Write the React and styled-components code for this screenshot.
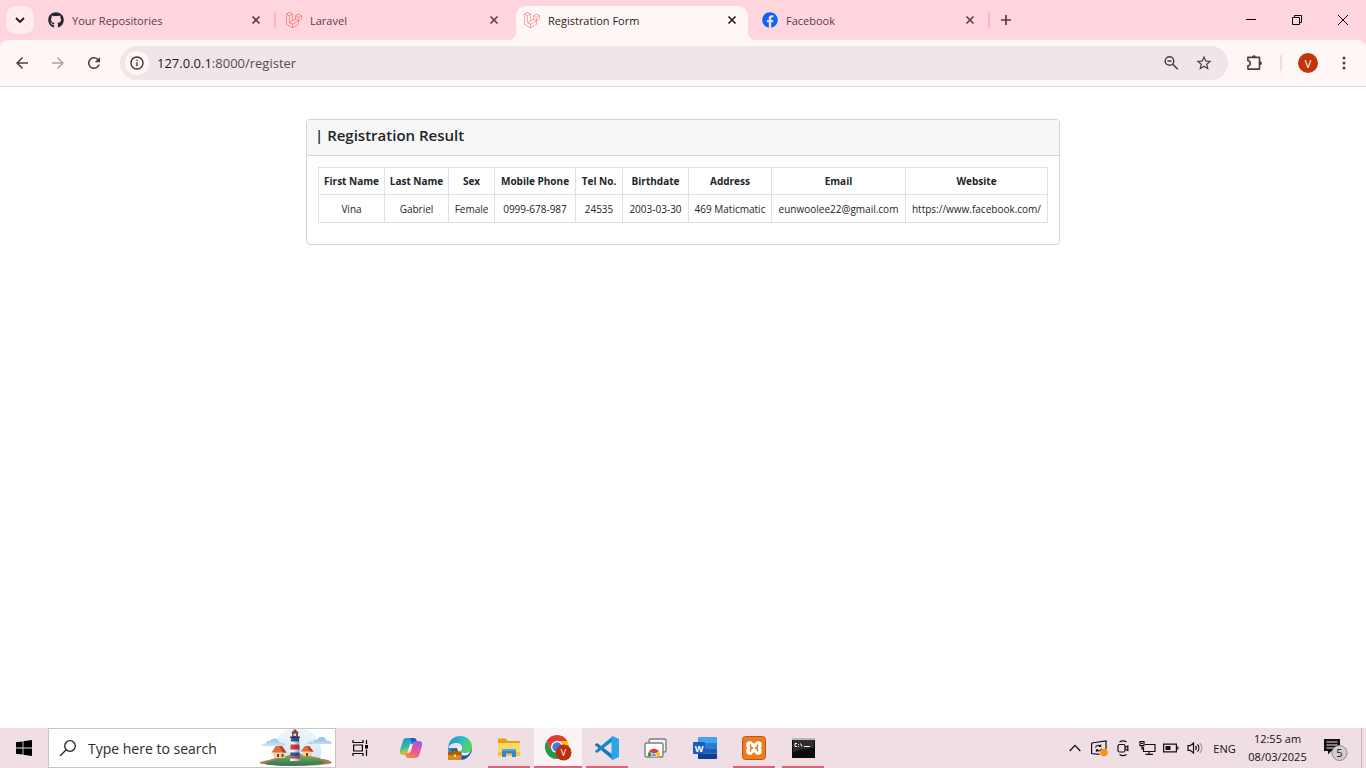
import React from "react";
import styled, { createGlobalStyle, css } from "styled-components";
import { FaGithub, FaLaravel, FaFacebook } from "react-icons/fa";
import { MdArrowBack, MdArrowForward, MdRefresh, MdStarBorder, MdInfoOutline } from "react-icons/md";

const GlobalStyle = createGlobalStyle`
  * { box-sizing: border-box; }
  body {
    margin: 0;
    background: #fff;
    font-family: "Segoe UI", "Open Sans", "Noto Sans", sans-serif;
    color: #212529;
  }
  button, input { font: inherit; color: inherit; }
  button { border: 0; padding: 0; background: none; cursor: pointer; }
`;

const Screen = styled.div`
  min-height: 100vh;
  display: flex;
  flex-direction: column;
`;

/* ---------- Tab strip ---------- */

const TabStrip = styled.header`
  display: flex;
  align-items: stretch;
  height: 40px;
  background: #ffd6de;
  color: #5c3a44;
`;

const TabSearch = styled.button`
  display: flex;
  align-items: center;
  justify-content: center;
  width: 28px;
  height: 28px;
  margin: 6px;
  border-radius: 10px;
  background: #ffecef;
  color: #1f1417;
`;

const Tabs = styled.nav`
  display: flex;
  align-items: flex-end;
`;

const Tab = styled.div`
  position: relative;
  display: flex;
  align-items: center;
  gap: 8px;
  width: 232px;
  height: 34px;
  padding: 0 8px 6px;
  font-size: 11px;

  ${(p) =>
    p.$active &&
    css`
      background: #fff7f6;
      color: #1f1a1b;
      border-radius: 10px 10px 0 0;

      &::before,
      &::after {
        content: "";
        position: absolute;
        bottom: 0;
        width: 8px;
        height: 8px;
      }
      &::before {
        right: 100%;
        background: radial-gradient(circle at 0 0, #ffd6de 8px, #fff7f6 8px);
      }
      &::after {
        left: 100%;
        background: radial-gradient(circle at 100% 0, #ffd6de 8px, #fff7f6 8px);
      }
    `}
`;

const Favicon = styled.span`
  display: flex;
  width: 16px;
  height: 16px;
  color: ${(p) => p.$color};
`;

const TabTitle = styled.span`
  flex: 1;
  white-space: nowrap;
`;

const TabClose = styled.button`
  display: flex;
  align-items: center;
  justify-content: center;
  width: 16px;
  height: 16px;
`;

const TabDivider = styled.span`
  align-self: center;
  width: 2px;
  height: 16px;
  margin: 0 2px;
  background: ${(p) => (p.$hidden ? "transparent" : "#ffb3c3")};
`;

const NewTab = styled.button`
  display: flex;
  align-items: center;
  justify-content: center;
  width: 28px;
`;

const WindowControls = styled.div`
  display: flex;
  margin-left: auto;
  color: #000;
`;

const WindowButton = styled.button`
  display: flex;
  align-items: center;
  justify-content: center;
  width: 46px;
`;

/* ---------- Toolbar ---------- */

const ToolbarBack = styled.div`
  background: #ffd6de;
`;

const Toolbar = styled.div`
  display: flex;
  align-items: center;
  gap: 8px;
  height: 47px;
  padding: 0 8px;
  background: #fff7f6;
  border-bottom: 1px solid #e6dfe1;
  border-radius: 8px 8px 0 0;
  color: #4f3f43;
`;

const ToolButton = styled.button`
  display: flex;
  align-items: center;
  justify-content: center;
  width: 28px;
  height: 28px;
  opacity: ${(p) => (p.$dim ? 0.45 : 1)};
`;

const AddressBar = styled.div`
  display: flex;
  align-items: center;
  flex: 1;
  height: 34px;
  margin: 0 4px;
  padding: 0 10px 0 5px;
  border-radius: 17px;
  background: #f0e5e9;
`;

const SiteInfo = styled.button`
  display: flex;
  align-items: center;
  justify-content: center;
  width: 24px;
  height: 24px;
  border-radius: 12px;
  background: #fff7f6;
  color: #3a2d30;
`;

const Address = styled.a`
  flex: 1;
  padding-left: 8px;
  font-size: 13px;
  color: #5b4b50;
  text-decoration: none;

  strong {
    font-weight: 400;
    color: #1f1a1b;
  }
`;

const AddressAction = styled.button`
  display: flex;
  align-items: center;
  justify-content: center;
  width: 28px;
  height: 28px;
  margin-left: 5px;
`;

const ToolDivider = styled.span`
  width: 2px;
  height: 16px;
  margin: 0 4px;
  background: #ffd6de;
`;

const Avatar = styled.span`
  display: flex;
  align-items: center;
  justify-content: center;
  width: 20px;
  height: 20px;
  border-radius: 10px;
  background: #bf360c;
  color: #fff;
  font-size: 11px;
`;

/* ---------- Page ---------- */

const Page = styled.main`
  flex: 1;
  padding: 32px 16px;
`;

const Card = styled.section`
  max-width: 754px;
  margin: 0 auto;
  border: 1px solid #d3d3d4;
  border-radius: 4px;
`;

const CardHeader = styled.div`
  padding: 4px 8px 9px;
  background: #f7f7f7;
  border-bottom: 1px solid #d3d3d4;
`;

const CardTitle = styled.h1`
  margin: 0;
  font-size: 15px;
  line-height: 22px;
  font-weight: 600;
`;

const CardBody = styled.div`
  padding: 11px 11px 21px;
  overflow-x: auto;
`;

const ResultTable = styled.table`
  width: 100%;
  table-layout: fixed;
  border-collapse: collapse;
  text-align: center;
  white-space: nowrap;
`;

const Column = styled.col`
  width: ${(p) => p.$width}px;
`;

const Cell = styled.td`
  height: 28px;
  padding: 0;
  border: 1px solid #dee2e6;
  font-size: 10px;
  line-height: 16px;
`;

const HeadCell = styled(Cell)`
  height: 27px;
  font-weight: 700;
`;

/* ---------- Taskbar ---------- */

const Taskbar = styled.footer`
  display: flex;
  height: 40px;
  background: #efdee4;
  color: #111;
`;

const StartButton = styled.button`
  display: flex;
  align-items: center;
  justify-content: center;
  width: 48px;
`;

const SearchBox = styled.label`
  display: flex;
  align-items: center;
  width: 288px;
  padding: 0 2px 0 10px;
  background: #fff;
  border: 1px solid #c9c4c6;
`;

const SearchInput = styled.input`
  flex: 1;
  min-width: 0;
  padding: 0 0 0 11px;
  border: 0;
  outline: 0;
  background: none;
  font-size: 14px;

  &::placeholder {
    color: #2b2b2b;
    opacity: 1;
  }
`;

const TaskList = styled.nav`
  display: flex;
  gap: 1px;
  margin-left: 3px;
`;

const TaskButton = styled.button`
  display: flex;
  align-items: center;
  justify-content: center;
  width: 48px;
  padding-top: 2px;
  background: ${(p) => (p.$active ? "#faf3f5" : "transparent")};
  border-bottom: 2px solid transparent;
  border-image: ${(p) =>
    p.$active
      ? "linear-gradient(#d9657b, #d9657b) 1"
      : p.$open
      ? "linear-gradient(90deg, transparent 4px, #d9657b 4px, #d9657b 44px, transparent 44px) 1"
      : "none"};
`;

const Tray = styled.div`
  display: flex;
  align-items: center;
  margin-left: auto;
`;

const TrayButton = styled.button`
  display: flex;
  align-items: center;
  justify-content: center;
  width: 24px;
  height: 40px;
`;

const Language = styled.button`
  width: 35px;
  font-size: 11px;
  text-align: center;
`;

const Clock = styled.time`
  width: 71px;
  font-size: 11px;
  line-height: 18px;
  text-align: center;
`;

const Notifications = styled.button`
  display: flex;
  align-items: center;
  justify-content: center;
  width: 48px;
  height: 40px;
  padding-right: 4px;
`;

const ShowDesktop = styled.button`
  width: 5px;
  height: 40px;
  border-left: 1px solid #c4b4b9;
`;

/* ---------- Drawings ---------- */

const CrossIcon = () => (
  <svg width="10" height="10" viewBox="0 0 10 10" stroke="currentColor" strokeWidth="1.6">
    <path d="M1.500 1.500l7 7M8.500 1.500l-7 7" />
  </svg>
);

const ZoomOutIcon = () => (
  <svg width="16" height="16" viewBox="0 0 16 16" fill="none" stroke="currentColor" strokeWidth="1.5">
    <circle cx="6.500" cy="6" r="4.300" />
    <path d="M9.600 9.100L14.800 14.300M4.500 6h4" />
  </svg>
);

const PuzzleIcon = () => (
  <svg width="18" height="18" viewBox="0 0 18 18" fill="none">
    <path d="M2.900 3.400h11.600v11.700H2.900v-3.400c3.200-.4 3.200-4.500 0-4.900z" stroke="currentColor" strokeWidth="1.600" strokeLinejoin="round" />
    <path d="M7 3.100a1.900 1.900 0 013.800 0zM15 7.300a1.900 1.900 0 010 3.800z" fill="currentColor" />
  </svg>
);

const LighthouseArt = () => (
  <svg width="74" height="38" viewBox="0 0 74 38">
    <defs>
      <linearGradient id="hill" x1="0" y1="0" x2="0" y2="1">
        <stop offset="0" stopColor="#8fb34c" />
        <stop offset=".5" stopColor="#4d9552" />
        <stop offset="1" stopColor="#2a7558" />
      </linearGradient>
      <linearGradient id="sky" x1="0" y1="0" x2="0" y2="1">
        <stop offset="0" stopColor="#eef8fd" />
        <stop offset="1" stopColor="#cfe8f6" />
      </linearGradient>
      <linearGradient id="cloud" x1="0" y1="0" x2="0" y2="1">
        <stop offset="0" stopColor="#8dbbe6" />
        <stop offset="1" stopColor="#cfe3f4" />
      </linearGradient>
      <linearGradient id="shade" x1="0" y1="0" x2="1" y2="0">
        <stop offset=".3" stopColor="#2a2f55" stopOpacity="0" />
        <stop offset="1" stopColor="#2a2f55" stopOpacity=".5" />
      </linearGradient>
    </defs>
    <path d="M16 32a24 24 0 1145-2z" fill="url(#sky)" />
    <path d="M2 17h25c-1-4-4-4-6-3-1-5-8-6-10-2-3-1-4 1-4 3-2-1-4 0-5 2zM48 15h25c-1-3-3-4-5-3-2-5-8-5-10-1-3-1-4 1-4 2-3-1-5 0-6 2z" fill="url(#cloud)" />
    <path d="M0 34c4-3 9-2 13-4 5-2 11-1 17-4 6-2 16-1 20 1 4 1 9 1 13 3 4 0 8 1 10 4-12 4-60 4-73 0z" fill="#b07a58" />
    <path d="M6 35c3-4 11-3 15-6 6-3 12-3 18-3 9 0 14 4 20 4 4 1 6 2 7 4-12 3-48 4-60 1z" fill="url(#hill)" />
    <path d="M15 22h11v7H15zM44 21h9v6h-9z" fill="#f7d0a0" />
    <path d="M12.500 23.500L17 17h6l4.500 6.500zM41.500 22.500L46 17h4l4.500 5.500z" fill="#e26a34" />
    <path d="M23 17l4.500 6.500H24L20 17zM50 17l4.500 5.500H51L48 17z" fill="#b9441f" />
    <path d="M18 25h2v3h-2zM22.500 25h2v3h-2zM47 24h2v3h-2z" fill="#7b3c22" />
    <path d="M32 8h8l1 24H31z" fill="#f6f2f0" />
    <path d="M32 8h8l.2 4.500h-8.400zM31.400 23.500h9.200l.2 4h-9.600z" fill="#2f5a96" />
    <path d="M31.600 15.500h8.800l.2 5h-9.200z" fill="#d63a3c" />
    <path d="M31.200 27.500h9.600l.1 2h-9.800z" fill="#d63a3c" />
    <path d="M33 3.500h6V8h-6z" fill="#3c5a85" />
    <path d="M32 4l4-4 4 4z" fill="#a83540" />
    <path d="M34.500 4.500h2.500V7h-2.500z" fill="#ffd66e" />
    <path d="M31 7.500h10V9H31z" fill="#2c3a67" />
    <path d="M32 8h8l1 24H31z" fill="url(#shade)" />
  </svg>
);

const TaskViewIcon = () => (
  <svg width="17" height="16" viewBox="0 0 17 16" fill="none" stroke="#000" strokeWidth="1.2">
    <path d="M1 0v2.500h10V0M1 16v-2.500h10V16M1.600 5h8.800v6H1.600zM14.500 0v4M14.500 9.500V16" />
    <path d="M13 5h3v3.500h-3z" fill="#000" stroke="none" />
  </svg>
);

const CopilotIcon = () => (
  <svg width="24" height="24" viewBox="0 0 24 24">
    <defs>
      <linearGradient id="cpA" x1="0" y1="0" x2=".3" y2="1">
        <stop offset="0" stopColor="#1b8fe0" />
        <stop offset=".55" stopColor="#36b6a6" />
        <stop offset="1" stopColor="#f2c522" />
      </linearGradient>
      <linearGradient id="cpB" x1=".6" y1="0" x2=".2" y2="1">
        <stop offset="0" stopColor="#a35ae0" />
        <stop offset=".5" stopColor="#e8588f" />
        <stop offset="1" stopColor="#f98a4c" />
      </linearGradient>
    </defs>
    <path d="M7.500 2h7c2 0 2.600 1.200 3.200 3l.5 1.600h-3c-1.600 0-2.300.8-2.800 2.400l-2 6.500C9.700 17.800 8.800 19 6.500 19H4c-3 0-3.600-2.500-2.800-5.200L3.800 5C4.500 3 5.500 2 7.500 2z" fill="url(#cpA)" />
    <path d="M16.500 22h-7c-2 0-2.600-1.200-3.200-3l-.5-1.600h3c1.600 0 2.300-.8 2.800-2.400l2-6.500C14.300 6.200 15.200 5 17.500 5H20c3 0 3.600 2.500 2.800 5.200L20.200 19c-.7 2-1.700 3-3.700 3z" fill="url(#cpB)" />
    <path d="M11.300 2h3.200c2 0 2.600 1.200 3.200 3-3 .2-3.700 1.600-4.300 3.500z" fill="#2457c5" />
    <path d="M10.800 8.200h3l-2 6.500c-.3 1-.8 1.700-1.600 1.700H8.500z" fill="#f4e7ef" />
  </svg>
);

const EdgeIcon = () => (
  <svg width="26" height="26" viewBox="0 0 26 26">
    <defs>
      <linearGradient id="edA" x1="0" y1=".2" x2="1" y2=".5">
        <stop offset="0" stopColor="#1c93dc" />
        <stop offset=".55" stopColor="#2dbfc4" />
        <stop offset="1" stopColor="#5fd552" />
      </linearGradient>
      <linearGradient id="edB" x1="0" y1="0" x2=".8" y2="1">
        <stop offset="0" stopColor="#1a8fe0" />
        <stop offset="1" stopColor="#0c4da3" />
      </linearGradient>
    </defs>
    <path d="M1 13a12 12 0 0024 0z" fill="url(#edB)" />
    <path d="M1 14A12 12 0 0113 1c7 0 12 5 12 10.500 0 4-3 6.500-6.500 6.500-3 0-4.500-1.200-4.500-2s1.200-1.300 1.200-3.300C15.200 10 12.500 8 9.300 8 5 8 1.500 10.500 1 14z" fill="url(#edA)" />
    <path d="M11 10.500c3 0 4.400 1.400 4.200 3-.1 1.500-1.200 1.800-1.200 2.500 0 .8 1.500 2 4.500 2 2 0 3.800-.8 5-2.200C22.500 20 19 21 16.500 20.500c-5-.8-8-6-5.500-10z" fill="#eef3f7" />
    <path d="M1 16.500h13.500V25H1z" rx="1" fill="#d98a1d" />
    <path d="M1 16.500h13.500v3.700H1z" fill="#a2600f" />
    <path d="M5.500 16.500V15h4.500v1.500" fill="none" stroke="#6d3b09" strokeWidth="1.200" />
    <path d="M7 19.500h2V22H7z" fill="#ffe08a" />
  </svg>
);

const ExplorerIcon = () => (
  <svg width="22" height="20" viewBox="0 0 22 20">
    <path d="M0 2c0-.8.6-1.500 1.500-1.500h6L10 3h10.500c.8 0 1.500.6 1.500 1.500V17H0z" fill="#dfa21b" />
    <path d="M0 5h22v13H0z" fill="#ffd767" />
    <path d="M0 14h22v4H0z" fill="#f6c344" />
    <path d="M4 19v-6.500c0-.8.700-1.500 1.500-1.500h11c.8 0 1.500.700 1.500 1.500V19h-4v-3.500H8V19z" fill="#2f87cf" />
    <path d="M5.500 11h11c.8 0 1.500.700 1.500 1.500V13H4v-.5c0-.8.700-1.500 1.500-1.500z" fill="#4fa7e5" />
  </svg>
);

const ChromeIcon = () => (
  <svg width="28" height="28" viewBox="0 0 28 28">
    <path d="M13 13V7h10.400A12 12 0 0113 25z" fill="#fbc116" />
    <path d="M2.600 7A12 12 0 0013 25l5.200-9L13 13 7.800 16z" fill="#279847" />
    <path d="M2.600 7A12 12 0 0123.400 7H13L7.800 16z" fill="#e33b2e" />
    <circle cx="13" cy="13" r="6" fill="#fff" />
    <circle cx="13" cy="13" r="4.700" fill="#3b7de9" />
    <circle cx="19.500" cy="18.500" r="8" fill="#b9300f" />
    <text x="19.500" y="22" textAnchor="middle" fontSize="9" fill="#fff">V</text>
  </svg>
);

const CodeIcon = () => (
  <svg width="24" height="24" viewBox="0 0 24 24">
    <path d="M0 8.500L2 7l16 12v5L.3 9.300z" fill="#1177b8" />
    <path d="M0 15.500L2 17 18 5V0L.3 14.700z" fill="#1788cc" />
    <path d="M17.500 0L24 3v18l-6.500 3c-.6-.3-1-1-1-1.500V1.500c0-.5.400-1.200 1-1.500z" fill="#2ba5ea" />
  </svg>
);

const RemoteIcon = () => (
  <svg width="24" height="20" viewBox="0 0 24 20">
    <rect x="5" y="1" width="17" height="13" rx="1.500" fill="#f2f4f5" stroke="#7b7f83" strokeWidth="1.400" />
    <rect x="1" y="5" width="18" height="14" rx="1.500" fill="#fff" stroke="#7b7f83" strokeWidth="1.400" />
    <path d="M4 18.300a6 6 0 011.200-5L8 16.500v1.800z" fill="#2a9d4a" />
    <path d="M5 13.500a6 6 0 0110 0L10 16z" fill="#e33b2e" />
    <path d="M14.800 13.300a6 6 0 011.200 5h-4v-3z" fill="#fbc116" />
    <path d="M7.300 18.300a2.700 2.700 0 015.400 0z" fill="#3b7de9" stroke="#fff" strokeWidth=".7" />
  </svg>
);

const WordIcon = () => (
  <svg width="24" height="22" viewBox="0 0 24 22">
    <path d="M6 0h17c.6 0 1 .4 1 1v5H5V1c0-.6.400-1 1-1z" fill="#41a5ee" />
    <path d="M5 6h19v5.300H5z" fill="#2b7cd3" />
    <path d="M5 11.300h19v5.200H5z" fill="#185abd" />
    <path d="M5 16.500h19V21c0 .6-.4 1-1 1H6c-.6 0-1-.4-1-1z" fill="#103f91" />
    <rect y="5" width="12" height="12" rx="1" fill="#1b5cbe" />
    <text x="6" y="14.500" textAnchor="middle" fontSize="9" fontWeight="700" fill="#fff">W</text>
  </svg>
);

const XamppIcon = () => (
  <svg width="24" height="24" viewBox="0 0 24 24">
    <rect x=".5" y=".5" width="23" height="23" rx="3" fill="#f07b1d" stroke="#b8560c" />
    <path
      d="M8.700 6.500H7.500a2 2 0 00-2 2v1.700l1.300 1.800-1.300 1.800v1.700a2 2 0 002 2h1.200l3.300-3 3.300 3h1.200a2 2 0 002-2v-1.700L17.200 12l1.300-1.800V8.500a2 2 0 00-2-2h-1.200l-3.300 3z"
      fill="#fff"
      stroke="#fff"
      strokeWidth="2.400"
      strokeLinejoin="round"
    />
    <path d="M8.500 9v2l2 1-2 1v2M15.500 9v2l-2 1 2 1v2" fill="none" stroke="#ee7a1e" strokeWidth="1.500" strokeLinejoin="round" strokeLinecap="round" />
  </svg>
);

const TerminalIcon = () => (
  <svg width="23" height="20" viewBox="0 0 23 20">
    <path d="M0 0h23v20H0z" fill="#0b0b0b" />
    <path d="M0 0h23v2H0z" fill="#b9b9b9" />
    <path d="M1 2h21v8c-7 0-14 1-21 4z" fill="#2e2e2e" />
    <path d="M5 5.500H3v3h2M6.500 6v.8M6.500 8v.8M8.500 5.500l1.500 3M12 8.500h6" fill="none" stroke="#fff" strokeWidth="1" />
  </svg>
);

const ChevronIcon = () => (
  <svg width="12" height="8" viewBox="0 0 12 8" fill="none" stroke="#111" strokeWidth="1.300">
    <path d="M.7 7L6 1.400 11.300 7" />
  </svg>
);

const SyncIcon = () => (
  <svg width="18" height="18" viewBox="0 0 18 18" fill="none" stroke="#111" strokeWidth="1.200">
    <path d="M1.600 4L16 2v8M1.600 4v10.500l8 .8" />
    <path d="M5.500 8.500a3 3 0 015-1.300M10.700 5.500v2H8.600M11.500 9.500a3 3 0 01-5 1.500M6.400 12.700v-2h2" strokeWidth="1.100" />
    <circle cx="14" cy="13.500" r="3.800" fill="#f7960a" stroke="none" />
  </svg>
);

const MeetIcon = () => (
  <svg width="12" height="18" viewBox="0 0 12 18" fill="none" stroke="#111" strokeWidth="1.200">
    <rect x="1" y="5.500" width="7" height="7.500" rx="1.500" />
    <path d="M8 8.500l2.800-1.500v4.500L8 10M2.500 3c2-1.400 5-1.400 7 0M2.500 15.500c2 1.400 5 1.400 7 0" />
  </svg>
);

const NetworkIcon = () => (
  <svg width="17" height="16" viewBox="0 0 17 16" fill="none" stroke="#111" strokeWidth="1.200">
    <path d="M6 4.500h10v7H4.500V7M10 11.500v2.500M6.500 14.400h7.500M1 1.600h4v4H1zM3 5.600V9h1.500M2 3.500h2" />
  </svg>
);

const BatteryIcon = () => (
  <svg width="16" height="10" viewBox="0 0 16 10">
    <path d="M.6 1.100h12.800v7.800H.6zM14.800 3.500v3" fill="none" stroke="#111" strokeWidth="1.200" />
    <path d="M2.500 3h5v4h-5z" fill="#111" />
  </svg>
);

const SpeakerIcon = () => (
  <svg width="17" height="14" viewBox="0 0 17 14" fill="none" stroke="#111" strokeWidth="1.200">
    <path d="M1 4.700h2.200L6.500 2v10L3.200 9.300H1zM8.500 5c1 1.200 1 2.800 0 4" />
    <path d="M10.500 3.500c1.800 2 1.800 5 0 7" />
    <path d="M12.800 2c2.600 3 2.600 7 0 10" stroke="#a79aa0" />
  </svg>
);

const NotificationIcon = () => (
  <svg width="26" height="26" viewBox="0 0 26 26">
    <path d="M2 4h16v12H9.500L6 19.500V16H2z" fill="#111" />
    <path d="M4.500 7h11M4.500 10h11M4.500 13h11" stroke="#efdee4" strokeWidth="1.100" />
    <circle cx="17.500" cy="18" r="7.500" fill="#d3cdd0" stroke="#8f898c" />
    <text x="17.500" y="22" textAnchor="middle" fontSize="11" fill="#111">5</text>
  </svg>
);

/* ---------- Data ---------- */

const TABS = [
  { title: "Your Repositories", icon: FaGithub, color: "#24292f" },
  { title: "Laravel", icon: FaLaravel, color: "#ff4f42", last: true },
  { title: "Registration Form", icon: FaLaravel, color: "#ff5f52", active: true },
  { title: "Facebook", icon: FaFacebook, color: "#0866ff" },
];

const COLUMNS = [
  { label: "First Name", value: "Vina", width: 66 },
  { label: "Last Name", value: "Gabriel", width: 64 },
  { label: "Sex", value: "Female", width: 46 },
  { label: "Mobile Phone", value: "0999-678-987", width: 81 },
  { label: "Tel No.", value: "24535", width: 47 },
  { label: "Birthdate", value: "2003-03-30", width: 66 },
  { label: "Address", value: "469 Maticmatic", width: 83 },
  { label: "Email", value: "eunwoolee22@gmail.com", width: 134 },
  { label: "Website", value: "https://www.facebook.com/", width: 142 },
];

const TASKS = [
  { name: "Copilot", icon: <CopilotIcon /> },
  { name: "Microsoft Edge", icon: <EdgeIcon /> },
  { name: "File Explorer", icon: <ExplorerIcon />, open: true },
  { name: "Google Chrome", icon: <ChromeIcon />, active: true },
  { name: "Visual Studio Code", icon: <CodeIcon />, open: true },
  { name: "Remote Desktop", icon: <RemoteIcon /> },
  { name: "Word", icon: <WordIcon /> },
  { name: "XAMPP", icon: <XamppIcon />, open: true },
  { name: "Command Prompt", icon: <TerminalIcon />, open: true },
];

const TRAY = [
  { name: "Show hidden icons", icon: <ChevronIcon /> },
  { name: "Updates", icon: <SyncIcon /> },
  { name: "Meet Now", icon: <MeetIcon /> },
  { name: "Network", icon: <NetworkIcon /> },
  { name: "Battery", icon: <BatteryIcon /> },
  { name: "Volume", icon: <SpeakerIcon /> },
];

export default function App() {
  return (
    <Screen>
      <GlobalStyle />
      <TabStrip>
        <TabSearch aria-label="Search tabs">
          <svg width="10" height="6" viewBox="0 0 10 6" fill="none" stroke="currentColor" strokeWidth="1.800">
            <path d="M1 1l4 4 4-4" />
          </svg>
        </TabSearch>
        <Tabs>
          {TABS.map(({ title, icon: Icon, color, active, last }) => (
            <React.Fragment key={title}>
              <Tab $active={active}>
                <Favicon $color={color}><Icon size={16} /></Favicon>
                <TabTitle>{title}</TabTitle>
                <TabClose aria-label={`Close ${title}`}><CrossIcon /></TabClose>
              </Tab>
              <TabDivider $hidden={active || last} />
            </React.Fragment>
          ))}
        </Tabs>
        <NewTab aria-label="New tab">
          <svg width="12" height="12" viewBox="0 0 12 12" stroke="currentColor" strokeWidth="1.700">
            <path d="M6 1v10M1 6h10" />
          </svg>
        </NewTab>
        <WindowControls>
          <WindowButton aria-label="Minimize">
            <svg width="10" height="10" viewBox="0 0 10 10" stroke="currentColor"><path d="M0 4.500h10" /></svg>
          </WindowButton>
          <WindowButton aria-label="Restore">
            <svg width="10" height="10" viewBox="0 0 10 10" fill="none" stroke="currentColor">
              <path d="M.5 2.500h7v7h-7zM2.500 2.500v-2h7v7h-2" />
            </svg>
          </WindowButton>
          <WindowButton aria-label="Close">
            <svg width="10" height="10" viewBox="0 0 10 10" stroke="currentColor"><path d="M0 0l10 10M10 0L0 10" /></svg>
          </WindowButton>
        </WindowControls>
      </TabStrip>

      <ToolbarBack>
        <Toolbar>
          <ToolButton aria-label="Back"><MdArrowBack size={18} /></ToolButton>
          <ToolButton aria-label="Forward" $dim><MdArrowForward size={18} /></ToolButton>
          <ToolButton aria-label="Reload"><MdRefresh size={18} /></ToolButton>
          <AddressBar>
            <SiteInfo aria-label="Site information"><MdInfoOutline size={16} /></SiteInfo>
            <Address href="#register"><strong>127.0.0.1</strong>:8000/register</Address>
            <AddressAction aria-label="Zoom"><ZoomOutIcon /></AddressAction>
            <AddressAction aria-label="Bookmark"><MdStarBorder size={18} /></AddressAction>
          </AddressBar>
          <ToolButton aria-label="Extensions"><PuzzleIcon /></ToolButton>
          <ToolDivider />
          <ToolButton aria-label="Profile"><Avatar>V</Avatar></ToolButton>
          <ToolButton aria-label="Menu">
            <svg width="4" height="14" viewBox="0 0 4 14" fill="currentColor">
              <circle cx="2" cy="2" r="1.500" /><circle cx="2" cy="7" r="1.500" /><circle cx="2" cy="12" r="1.500" />
            </svg>
          </ToolButton>
        </Toolbar>
      </ToolbarBack>

      <Page>
        <Card>
          <CardHeader><CardTitle>| Registration Result</CardTitle></CardHeader>
          <CardBody>
            <ResultTable>
              <colgroup>
                {COLUMNS.map((c) => <Column key={c.label} $width={c.width} />)}
              </colgroup>
              <thead>
                <tr>{COLUMNS.map((c) => <HeadCell as="th" key={c.label} scope="col">{c.label}</HeadCell>)}</tr>
              </thead>
              <tbody>
                <tr>{COLUMNS.map((c) => <Cell key={c.label}>{c.value}</Cell>)}</tr>
              </tbody>
            </ResultTable>
          </CardBody>
        </Card>
      </Page>

      <Taskbar>
        <StartButton aria-label="Start">
          <svg width="16" height="16" viewBox="0 0 16 16" fill="#000">
            <path d="M0 2.300l6.600-.9v6.200H0zM7.400 1.300L16 0v7.600H7.400zM0 8.400h6.600v6.200L0 13.700zM7.400 8.400H16V16l-8.600-1.300z" />
          </svg>
        </StartButton>
        <SearchBox>
          <svg width="18" height="18" viewBox="0 0 18 18" fill="none" stroke="#222" strokeWidth="1.300">
            <circle cx="11" cy="7" r="5.300" /><path d="M7.200 10.800L1 17" />
          </svg>
          <SearchInput type="text" placeholder="Type here to search" aria-label="Type here to search" />
          <LighthouseArt />
        </SearchBox>
        <StartButton aria-label="Task View"><TaskViewIcon /></StartButton>
        <TaskList>
          {TASKS.map((t) => (
            <TaskButton key={t.name} aria-label={t.name} $open={t.open} $active={t.active}>{t.icon}</TaskButton>
          ))}
        </TaskList>
        <Tray>
          {TRAY.map((t) => <TrayButton key={t.name} aria-label={t.name}>{t.icon}</TrayButton>)}
          <Language>ENG</Language>
          <Clock dateTime="2025-03-08T00:55">12:55 am<br />08/03/2025</Clock>
          <Notifications aria-label="Notifications"><NotificationIcon /></Notifications>
          <ShowDesktop aria-label="Show desktop" />
        </Tray>
      </Taskbar>
    </Screen>
  );
}
